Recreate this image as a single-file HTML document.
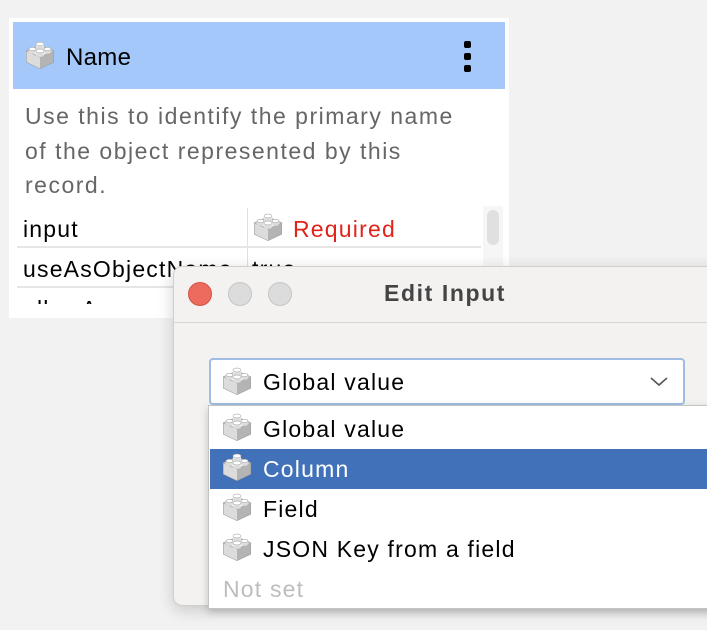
<!DOCTYPE html>
<html><head><meta charset="utf-8">
<style>
*{margin:0;padding:0;box-sizing:border-box}
body{width:707px;height:630px;background:#f2f2f2;position:relative;overflow:hidden;font-family:"Liberation Sans",Arial,sans-serif}
.abs{position:absolute}
.t{position:absolute;white-space:nowrap}
.d{font-size:23px;letter-spacing:1.2px}
svg.b{position:absolute;width:30px;height:30px}
</style></head><body>
<svg width="0" height="0" style="position:absolute">
<defs>
<g id="brick">
<path d="M1.5 11 L15 5 L28.5 11 L28.5 22 L15 28.5 L1.5 22 Z" fill="#c9c9c9" stroke="#999" stroke-width="1"/>
<path d="M15 17 L28.5 11 L28.5 22 L15 28.5 Z" fill="#b4b4b4"/>
<path d="M1.5 11 L15 17 L15 28.5 L1.5 22 Z" fill="#dcdcdc"/>
<path d="M1.5 11 L15 17 L28.5 11 L15 5 Z" fill="#f2f2f2" stroke="#aaa" stroke-width="0.8"/>
<rect x="4" y="9" width="7" height="3" fill="#e8e8e8"/><ellipse cx="7.5" cy="12" rx="3.5" ry="1.7" fill="#ddd"/><ellipse cx="7.5" cy="9" rx="3.5" ry="1.7" fill="#fff" stroke="#aaa" stroke-width="0.6"/>
<rect x="19" y="9" width="7" height="3" fill="#e8e8e8"/><ellipse cx="22.5" cy="12" rx="3.5" ry="1.7" fill="#ddd"/><ellipse cx="22.5" cy="9" rx="3.5" ry="1.7" fill="#fff" stroke="#aaa" stroke-width="0.6"/>
<rect x="11" y="4" width="8" height="4" fill="#e8e8e8"/><ellipse cx="15" cy="8" rx="4" ry="1.9" fill="#ddd"/><ellipse cx="15" cy="4" rx="4" ry="1.9" fill="#fff" stroke="#aaa" stroke-width="0.6"/>
<rect x="11" y="11" width="8" height="4" fill="#e8e8e8"/><ellipse cx="15" cy="15" rx="4" ry="1.9" fill="#ddd"/><ellipse cx="15" cy="11" rx="4" ry="1.9" fill="#fff" stroke="#aaa" stroke-width="0.6"/>
</g></defs></svg>

<div class="abs" style="left:9px;top:18px;width:500px;height:300px;background:#fff"></div>
<div class="abs" style="left:13px;top:22px;width:492px;height:67px;background:#a3c8f9"></div>
<svg class="b" style="left:25px;top:40px"><use href="#brick"/></svg>
<div class="t" style="left:66px;top:44px;font-size:24px;letter-spacing:0.3px;color:#000">Name</div>
<div class="abs" style="left:464px;top:41px;width:7px;height:7px;background:#000;border-radius:2px"></div>
<div class="abs" style="left:464px;top:53px;width:7px;height:7px;background:#000;border-radius:2px"></div>
<div class="abs" style="left:464px;top:65px;width:7px;height:7px;background:#000;border-radius:2px"></div>
<div class="abs d" style="left:25px;top:99px;line-height:34.5px;color:#666;width:480px;letter-spacing:1.5px">Use this to identify the primary name<br>of the object represented by this<br>record.</div>

<div class="abs" style="left:17px;top:207px;width:467px;height:111px;background:#fff"></div>
<div class="abs" style="left:247px;top:208px;width:1px;height:110px;background:#e0e0e0"></div>
<div class="abs" style="left:17px;top:246px;width:464px;height:2px;background:#e6e6e6"></div>
<div class="abs" style="left:17px;top:286px;width:464px;height:2px;background:#e6e6e6"></div>
<div class="abs" style="left:483px;top:206px;width:20px;height:112px;background:#f6f6f6"></div>
<div class="abs" style="left:487px;top:210px;width:12px;height:35px;background:#e0e0e0;border-radius:6px"></div>
<div class="t d" style="left:23px;top:216px;color:#000">input</div>
<svg class="b" style="left:253px;top:212px"><use href="#brick"/></svg>
<div class="t d" style="left:293px;top:216px;color:#e2231a">Required</div>
<div class="t d" style="left:23px;top:256px;color:#000">useAsObjectName</div>
<div class="t d" style="left:252px;top:256px;color:#000">true</div>
<div class="abs" style="left:17px;top:288px;width:300px;height:16px;overflow:hidden"><div class="t d" style="left:6px;top:8px;color:#000">allowAnonymous</div></div>

<div class="abs" style="left:173px;top:266px;width:560px;height:340px;background:#f3f2f1;border-radius:9px;border:1px solid #cfcfcf;box-shadow:0 4px 16px rgba(0,0,0,0.18)"></div>
<div class="abs" style="left:174px;top:322px;width:533px;height:1px;background:#d6d6d6"></div>
<div class="abs" style="left:188px;top:282px;width:24px;height:24px;border-radius:50%;background:#ec6a5e;border:1px solid #d25247"></div>
<div class="abs" style="left:228px;top:282px;width:24px;height:24px;border-radius:50%;background:#dcdcdc;border:1px solid #c6c6c6"></div>
<div class="abs" style="left:268px;top:282px;width:24px;height:24px;border-radius:50%;background:#dcdcdc;border:1px solid #c6c6c6"></div>
<div class="t" style="left:384px;top:280px;font-size:23px;font-weight:bold;letter-spacing:1.6px;color:#444">Edit Input</div>

<div class="abs" style="left:209px;top:358px;width:476px;height:47px;background:#fff;border:2px solid #9fbde2;border-radius:4px"></div>
<svg class="b" style="left:222px;top:366px"><use href="#brick"/></svg>
<div class="t d" style="left:263px;top:369px;color:#000">Global value</div>
<svg class="abs" style="left:648px;top:373px" width="22" height="16"><path d="M3 5 L11 12 L19 5" fill="none" stroke="#555" stroke-width="1.6"/></svg>

<div class="abs" style="left:208px;top:405px;width:510px;height:204px;background:#fff;border:1px solid #c4c4c4;box-shadow:0 3px 8px rgba(0,0,0,0.2)"></div>
<div class="abs" style="left:210px;top:449px;width:497px;height:40px;background:#4172b9"></div>
<svg class="b" style="left:222px;top:412px"><use href="#brick"/></svg>
<div class="t d" style="left:263px;top:416px;color:#000">Global value</div>
<svg class="b" style="left:222px;top:452px"><use href="#brick"/></svg>
<div class="t d" style="left:263px;top:456px;color:#fff">Column</div>
<svg class="b" style="left:222px;top:492px"><use href="#brick"/></svg>
<div class="t d" style="left:263px;top:496px;color:#000">Field</div>
<svg class="b" style="left:222px;top:532px"><use href="#brick"/></svg>
<div class="t d" style="left:263px;top:536px;color:#000">JSON Key from a field</div>
<div class="t d" style="left:223px;top:576px;color:#bdbdbd">Not set</div>
</body></html>
